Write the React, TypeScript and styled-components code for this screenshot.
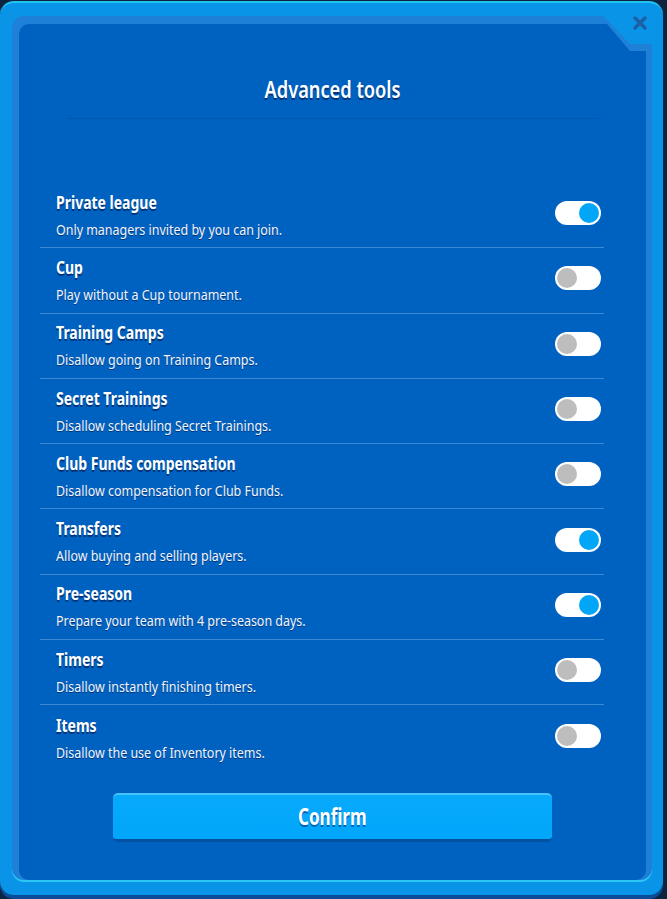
import React, { useState } from 'react'
import styled, { createGlobalStyle } from 'styled-components'

const GlobalStyle = createGlobalStyle`
  html, body {
    margin: 0;
    padding: 0;
    background: #0c2440;
  }
  * {
    box-sizing: border-box;
  }
`

// the game uses a condensed face; Noto Sans squeezed horizontally stands in for it
const font = `"Noto Sans", "Open Sans", sans-serif`

const Page = styled.div`
  width: 667px;
  height: 899px;
  overflow: hidden;
  padding-top: 1px;
  font-family: ${font};
`

const Frame = styled.div`
  position: relative;
  width: 663px;
  height: 894px;
  padding: 13px 11px 13px 12px;
  background: #0a94e8;
  border-top: 2px solid #21c4f1;
  border-radius: 14px;
  box-shadow: 0 4px 0 #0b4c98;
`

const Close = styled.button`
  position: absolute;
  top: 12px;
  right: 15px;
  width: 16px;
  height: 16px;
  padding: 0;
  border: none;
  background: transparent;
  cursor: pointer;
`

const Ring = styled.div`
  height: 100%;
  padding: 8px 6px 2px 7px;
  background: #1e81d7;
  border-radius: 12px;
  box-shadow: inset 0 -2px 0 #2cc6f4;
  clip-path: polygon(0 0, calc(100% - 49px) 0, calc(100% - 22px) 28px, 100% 28px, 100% 100%, 0 100%);
`

const Panel = styled.div`
  height: 100%;
  display: flex;
  flex-direction: column;
  background: #0062c0;
  border-radius: 10px;
  clip-path: polygon(0 0, calc(100% - 39px) 0, calc(100% - 16px) 27px, 100% 27px, 100% 100%, 0 100%);
  color: #fff;
`

const Header = styled.div`
  margin: 0 48px;
  padding-top: 50px;
  padding-bottom: 14px;
  border-bottom: 1px solid #0557ae;
  text-align: center;
`

const Title = styled.h1`
  margin: 0;
  font-size: 24px;
  line-height: 30px;
  font-weight: 600;
  text-shadow: 0 2px 0 #00357a;
  transform: scaleX(0.76);
`

const List = styled.div`
  margin: 64px 42px 0 21px;
  display: flex;
  flex-direction: column;
`

const Row = styled.div`
  height: 65.3px;
  display: flex;
  align-items: center;
  justify-content: space-between;
  padding: 0 3px 0 16px;
  border-bottom: 1px solid #3c8ad5;

  &:last-child {
    border-bottom: none;
  }
`

const RowText = styled.div`
  flex: 1;
  display: flex;
  flex-direction: column;
  gap: 8px;
  margin-top: -1px;
`

const RowTitle = styled.div`
  font-size: 17.5px;
  line-height: 20px;
  font-weight: 700;
  text-shadow: 0 2px 0 #00357a;
  transform: scaleX(0.8);
  transform-origin: left center;
`

const RowDesc = styled.div`
  font-size: 15px;
  line-height: 18px;
  color: #f2f6ff;
  text-shadow: 0 1px 0 #00357a;
  transform: scaleX(0.83);
  transform-origin: left center;
`

const Toggle = styled.button<{ $on: boolean }>`
  flex-shrink: 0;
  width: 46px;
  height: 24px;
  padding: 2px;
  border: none;
  border-radius: 12px;
  background: #fff;
  display: flex;
  justify-content: ${p => (p.$on ? 'flex-end' : 'flex-start')};
  align-items: center;
  cursor: pointer;
  margin-top: -4px;
`

const Knob = styled.span<{ $on: boolean }>`
  width: 20px;
  height: 20px;
  border-radius: 50%;
  background: ${p => (p.$on ? '#02a6f6' : '#bdbdbd')};
`

const Footer = styled.div`
  display: flex;
  justify-content: center;
  padding-top: 22px;
`

const ConfirmButton = styled.button`
  width: 439px;
  height: 49px;
  padding: 0 0 3px;
  border: none;
  border-top: 2px solid #46c3fb;
  border-bottom: 3px solid #0451a2;
  border-radius: 5px;
  background: linear-gradient(#07aafb, #02a6fa);
  color: #fff;
  font-family: ${font};
  font-size: 24px;
  font-weight: 700;
  text-shadow: 0 2px 0 #0065b8;
  cursor: pointer;
`

const ButtonLabel = styled.span`
  display: inline-block;
  transform: scaleX(0.71);
`

const settings = [
  { title: 'Private league', desc: 'Only managers invited by you can join.', on: true },
  { title: 'Cup', desc: 'Play without a Cup tournament.', on: false },
  { title: 'Training Camps', desc: 'Disallow going on Training Camps.', on: false },
  { title: 'Secret Trainings', desc: 'Disallow scheduling Secret Trainings.', on: false },
  { title: 'Club Funds compensation', desc: 'Disallow compensation for Club Funds.', on: false },
  { title: 'Transfers', desc: 'Allow buying and selling players.', on: true },
  { title: 'Pre-season', desc: 'Prepare your team with 4 pre-season days.', on: true },
  { title: 'Timers', desc: 'Disallow instantly finishing timers.', on: false },
  { title: 'Items', desc: 'Disallow the use of Inventory items.', on: false },
]

const App: React.FC = () => {
  const [values, setValues] = useState(settings.map(s => s.on))

  const flip = (i: number) => setValues(v => v.map((x, j) => (j === i ? !x : x)))

  return (
    <Page>
      <GlobalStyle />
      <Frame>
        <Close aria-label="Close">
          <svg width="16" height="16" viewBox="0 0 16 16">
            <path d="M3 3 L13 13 M13 3 L3 13" stroke="#1b5fa4" strokeWidth="3.5" strokeLinecap="round" />
          </svg>
        </Close>
        <Ring>
          <Panel>
            <Header>
              <Title>Advanced tools</Title>
            </Header>
            <List>
              {settings.map((s, i) => (
                <Row key={s.title}>
                  <RowText>
                    <RowTitle>{s.title}</RowTitle>
                    <RowDesc>{s.desc}</RowDesc>
                  </RowText>
                  <Toggle $on={values[i]} onClick={() => flip(i)}>
                    <Knob $on={values[i]} />
                  </Toggle>
                </Row>
              ))}
            </List>
            <Footer>
              <ConfirmButton>
                <ButtonLabel>Confirm</ButtonLabel>
              </ConfirmButton>
            </Footer>
          </Panel>
        </Ring>
      </Frame>
    </Page>
  )
}

export default App
